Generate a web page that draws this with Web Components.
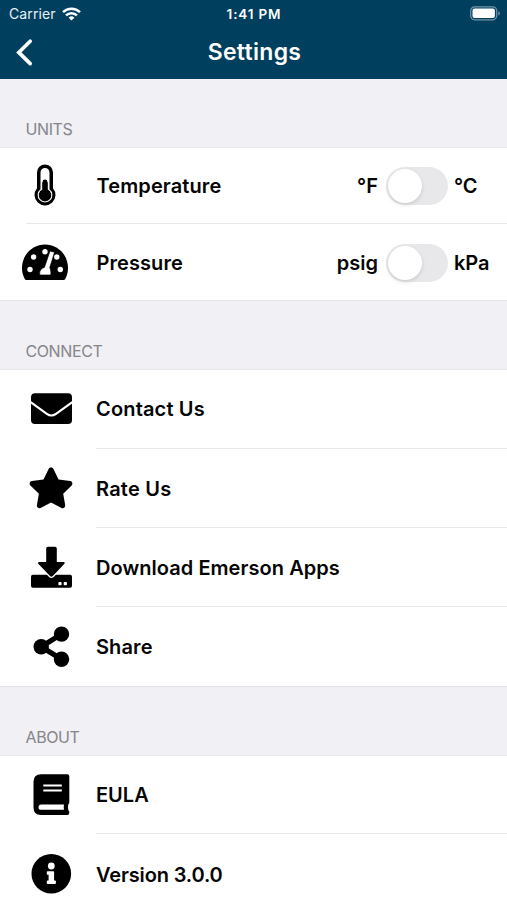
<!DOCTYPE html>
<html lang="en">
<head>
<meta charset="utf-8">
<title>Settings</title>
<style>
html,body{margin:0;height:900px;overflow:hidden;background:#fff}
body{font-family:Inter,"Liberation Sans",sans-serif;color:#050505}
</style>
</head>
<body>
<settings-screen></settings-screen>
<script>
const ICONS = {
  temperature: `<path d="M37 172.5a8 8 0 0 1 16 0v15.700a10.500 10.500 0 1 1-16 0z"/><path d="M40.500 172.400a4.500 4.500 0 0 1 9 0v16.800a7.400 7.400 0 1 1-9 0z" fill="#fff"/><path d="M42.600 182a2.400 2.400 0 0 1 4.800 0v.2h.4v7.300a6.300 6.300 0 1 1-5.600 0v-7.300h.4z"/>`,
  pressure: `<path d="M26.500 280q-1.200 0-1.800-1a23 23.500 0 1 1 40.600 0q-.6 1-1.800 1z"/><g fill="#fff"><circle cx="30" cy="269.500" r="2.700"/><circle cx="33.600" cy="257" r="2.700"/><circle cx="45" cy="251.800" r="2.700"/><circle cx="56.800" cy="257" r="2.700"/><circle cx="60.300" cy="269.500" r="2.700"/><path d="M50 251 54.600 252.200 49.800 267.500Q50.900 269.800 50.900 272.500V273.800Q50.900 275 49.700 275H40.800Q39.600 275 39.600 273.800C39.600 270 41.800 267.800 44.400 267.400Z" stroke="#000" stroke-width=".7"/></g>`,
  mail: `<rect x="31" y="393.300" width="41" height="30.700" rx="4"/><path d="M30 401.600 46.800 413.800Q51.400 417.200 56 413.800L73 401.600" fill="none" stroke="#fff" stroke-width="2.100"/>`,
  star: `<path transform="translate(28 467.4) scale(.08)" d="M259.3 17.8L194 150.2 47.9 171.5c-26.2 3.8-36.7 36.1-17.7 54.6l105.7 103-25 145.5c-4.5 26.3 23.2 46 46.4 33.7L288 439.6l130.7 68.7c23.2 12.2 50.9-7.4 46.4-33.7l-25-145.5 105.7-103c19-18.5 8.5-50.8-17.7-54.6L382 150.2 316.7 17.8c-11.7-23.6-45.6-23.9-57.4 0z"/>`,
  download: `<rect x="31" y="574.800" width="41" height="12.900" rx="1.900"/><path d="M48 546.800h7q1.800 0 1.800 1.800V562H63.400q2.400 0 .8 1.900L52.800 576q-1.400 1.400-2.800 0L38.500 563.900q-1.600-1.900.8-1.900H46.200V548.600q0-1.800 1.800-1.800z" stroke="#fff" stroke-width="2.600" paint-order="stroke"/><rect x="58.400" y="582" width="3.200" height="3.200" rx=".8" fill="#fff"/><rect x="63.700" y="582" width="3.200" height="3.200" rx=".8" fill="#fff"/>`,
  share: `<circle cx="41.200" cy="646.700" r="7.700"/><circle cx="61.500" cy="634.100" r="7.700"/><circle cx="61.500" cy="659.200" r="7.700"/><path d="M61.500 634.100 41.200 646.700 61.500 659.200" fill="none" stroke="#000" stroke-width="5.200"/>`,
  book: `<path d="M41 774.200H67.300Q69.300 774.200 69.300 776.200V802.500Q69.300 803.500 68.300 804.300Q67.700 807 68.300 810.200Q69.300 811 69.300 812V813Q69.300 814.900 67.300 814.900H41Q33.500 814.900 33.500 807.400V781.700Q33.500 774.200 41 774.200Z"/><path d="M41.200 804.500H64Q63.400 807 64 809.800H41.200A2.650 2.650 0 0 1 41.200 804.500Z" fill="#fff"/><path d="M43.300 785.400H61.800M43.300 790.600H61.800" stroke="#fff" stroke-width="2"/>`,
  info: `<circle cx="51.300" cy="873.700" r="19.800"/><g fill="#fff"><circle cx="51.300" cy="866" r="3.400"/><path d="M47.700 871.200H53.200Q54.100 871.200 54.100 872.100V880.400H55Q55.900 880.400 55.900 881.300V883.100Q55.900 884 55 884H47.700Q46.800 884 46.800 883.100V881.300Q46.800 880.400 47.700 880.400H48.600V874.800H47.700Q46.800 874.800 46.800 873.900V872.100Q46.800 871.200 47.700 871.200Z"/></g>`
};

function define(name, render) {
  customElements.define(name, class extends HTMLElement {
    connectedCallback() {
      if (this.shadowRoot) return;
      this.attachShadow({ mode: "open" }).innerHTML = render(this);
    }
  });
}

define("status-bar", () => `
<style>
:host{display:grid;grid-template-columns:1fr auto 1fr;align-items:center;height:27px;box-sizing:border-box;padding:0 7px 0 9px;color:#e9f1f5;font-size:14px}
.left{display:flex;align-items:center;gap:6px}
.carrier{letter-spacing:.1px}
.time{font-weight:600;font-size:13.500px;letter-spacing:.85px;color:#fff;margin-right:1px}
.battery{justify-self:end}
svg{display:block}
</style>
<div class="left"><span class="carrier">Carrier</span>
<svg width="19" height="14" viewBox="0 0 19 14" fill="none" stroke="#fff" stroke-width="2.500"><path d="M1 5.100a12.200 12.200 0 0 1 17 0M4 8.400a7.900 7.900 0 0 1 11 0"/><path d="M9.500 13.600 6.600 10.700a4.100 4.100 0 0 1 5.800 0z" fill="#fff" stroke="none"/></svg></div>
<span class="time">1:41 PM</span>
<svg class="battery" width="30" height="15" viewBox="0 0 30 15"><rect x=".7" y=".8" width="26" height="13" rx="4" fill="none" stroke="#7295a8" stroke-width="1.200"/><rect x="2.500" y="2.600" width="22.400" height="9.400" rx="2" fill="#fff"/><path d="M28.300 5.200q1.600.6 1.600 2.200t-1.600 2.200z" fill="#7295a8"/></svg>`);

define("nav-bar", () => `
<style>
:host{display:grid;grid-template-columns:60px 1fr 58px;align-items:center;height:52px;color:#fff}
h1{margin:0;text-align:center;font-size:23px;line-height:50px;font-weight:600;height:52px;letter-spacing:.3px}
svg{display:block}
</style>
<svg width="60" height="52" viewBox="0 27 60 52"><path d="M30.200 41.200 18.800 52.400 30.200 63.600" fill="none" stroke="#fff" stroke-width="3.700" stroke-linecap="round" stroke-linejoin="miter"/></svg>
<h1><slot></slot></h1>`);

define("toggle-switch", () => `
<style>
:host{display:flex;box-sizing:border-box;width:62px;height:38px;padding:2px;border-radius:19px;background:#e8e8ea}
i{width:34px;height:34px;border-radius:50%;background:#fff;box-shadow:0 2px 4px rgba(0,0,0,.12)}
</style><i></i>`);

define("unit-choice", e => `
<style>
:host{display:flex;align-items:center;font-size:20px;font-weight:600}
toggle-switch{margin:0 6px 0 8px}
.on{width:53px;letter-spacing:-.1px}
</style><span>${e.getAttribute("off")}</span><toggle-switch></toggle-switch><span class="on">${e.getAttribute("on")}</span>`);

define("list-section", e => `
<style>
:host{display:block}
header{display:flex;align-items:flex-end;box-sizing:border-box;height:${e.getAttribute("head")}px;padding:0 25.500px 8px;background:#f0f0f5;border-bottom:1px solid #e6e6e9;color:#85858a;font-size:16px;line-height:20px}
:host(:not([first])) header{border-top:1px solid #e4e4e8}
header span{letter-spacing:-.4px}
</style><header><span>${e.getAttribute("label")}</span></header><slot></slot>`);

define("list-row", e => {
  const y = +e.getAttribute("y"), h = +e.getAttribute("h");
  return `
<style>
:host{display:flex;height:${h}px;background:#fff;font-size:20px;font-weight:600}
svg{display:block;flex:none}
.body{flex:1;display:flex;align-items:center;justify-content:space-between;box-sizing:border-box;padding:${e.getAttribute("drop") || 0}px 0 ${e.getAttribute("lift") || 0}px;background:linear-gradient(#e9e9eb,#e9e9eb) bottom left/100% 1px no-repeat}
:host([last]) .body,:host([inset]) .body{background:none}
:host([inset]){background:linear-gradient(#e9e9eb,#e9e9eb) 26px 100%/100% 1px no-repeat #fff}
.label{letter-spacing:${e.getAttribute("track") || 0}px}
:host([units]) .label{padding-left:.6px}
</style>
<svg width="96" height="${h}" viewBox="0 ${y} 96 ${h}">${ICONS[e.getAttribute("icon")]}</svg>
<div class="body"><span class="label">${e.getAttribute("label")}</span><slot></slot></div>`;
});

define("settings-screen", () => `
<style>
:host{display:block;width:507px;height:900px;overflow:hidden}
.top{height:79px;background:#003f5e}
</style>
<div class="top"><status-bar></status-bar><nav-bar>Settings</nav-bar></div>
<list-section label="UNITS" head="69" first>
<list-row icon="temperature" label="Temperature" y="148" h="76" lift="1" track=".1" inset units><unit-choice off="°F" on="°C"></unit-choice></list-row>
<list-row icon="pressure" label="Pressure" y="224" h="76" drop="1" track=".06" last units><unit-choice off="psig" on="kPa"></unit-choice></list-row>
</list-section>
<list-section label="CONNECT" head="70">
<list-row icon="mail" label="Contact Us" y="370" h="79" lift="1" track=".16"></list-row>
<list-row icon="star" label="Rate Us" y="449" h="79" drop="1" track=".22"></list-row>
<list-row icon="download" label="Download Emerson Apps" y="528" h="79" drop="1" track=".05"></list-row>
<list-row icon="share" label="Share" y="607" h="79" track=".1" last></list-row>
</list-section>
<list-section label="ABOUT" head="70">
<list-row icon="book" label="EULA" y="756" h="78" lift="1"></list-row>
<list-row icon="info" label="Version 3.0.0" y="834" h="80" drop="1" track="-.15" last></list-row>
</list-section>`);
</script>
</body>
</html>
